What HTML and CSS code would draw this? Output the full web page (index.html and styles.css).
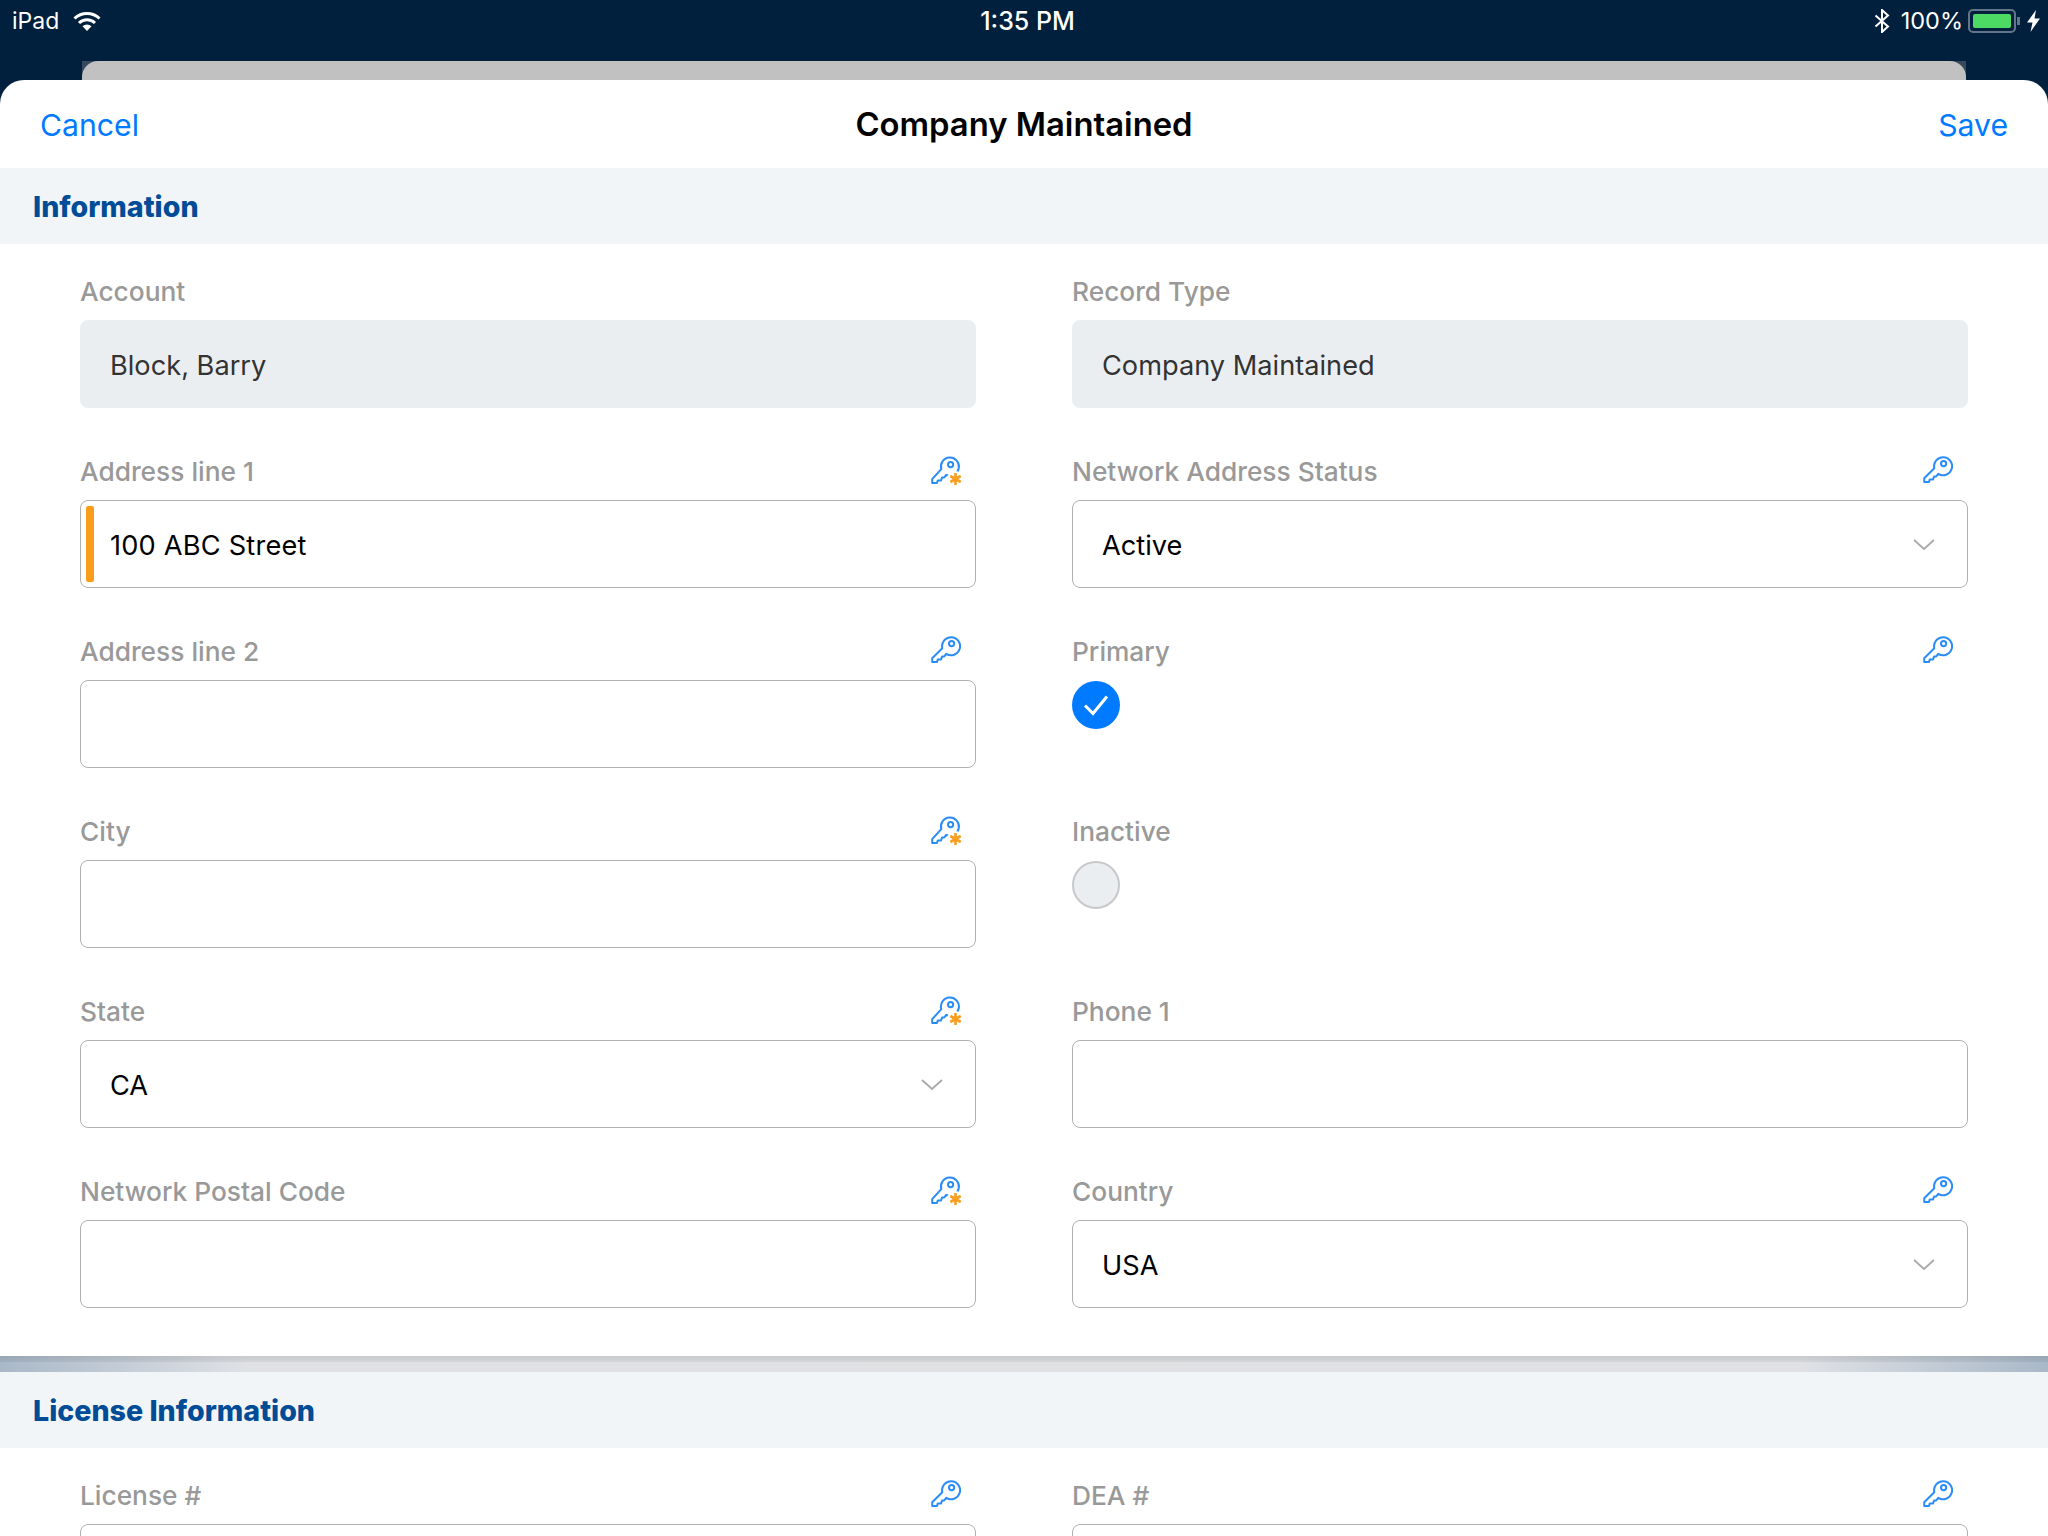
FILE: index.html
```html
<!DOCTYPE html>
<html lang="en">
<head>
  <meta charset="UTF-8">
  <title>Company Maintained</title>
  <link rel="stylesheet" href="styles.css">
</head>
<body>
  <svg class="defs" width="0" height="0">
    <symbol id="key" viewBox="0 0 30 28">
      <path d="M11.3 13.2 1.2 23.2V27H6l.8-2.600h3.300l.9-2.900h2.200l2-2.700A9 9 0 1 0 11.3 13.2Z" fill="none" stroke="#2a8cf7" stroke-width="2" stroke-linejoin="round"/>
      <circle cx="20.6" cy="8.6" r="2.6" fill="none" stroke="#2a8cf7" stroke-width="2"/>
    </symbol>
    <symbol id="key-star" viewBox="0 0 34 32">
      <path d="M10.3 13.2 1.2 23.2V27H6l.8-2.600h3.300l.9-2.900h2.200l2-2.700A9 9 0 1 0 10.3 13.2Z" fill="none" stroke="#2a8cf7" stroke-width="2" stroke-linejoin="round"/>
      <circle cx="19.6" cy="8.6" r="2.6" fill="none" stroke="#2a8cf7" stroke-width="2"/>
      <circle cx="24" cy="23" r="8" fill="#fff"/>
      <path d="M24.500 17v12M19.300 20l10.400 6M29.700 20l-10.400 6" stroke="#f99d1c" stroke-width="2.600" fill="none"/>
    </symbol>
    <symbol id="chevron" viewBox="0 0 22 11">
      <path d="M1 1l10 9 10-9" fill="none" stroke="#a9a9a9" stroke-width="1.800"/>
    </symbol>
  </svg>

  <div class="status-bar">
    <div class="status-left">
      <span>iPad</span>
      <svg class="wifi" width="28" height="20" viewBox="0 0 28 20">
        <path d="M1.500 7.500a18 18 0 0 1 25 0" fill="none" stroke="#fff" stroke-width="3"/>
        <path d="M6 12a11.500 11.500 0 0 1 16 0" fill="none" stroke="#fff" stroke-width="3"/>
        <path d="M9.500 15.200a6.500 6.500 0 0 1 9 0L14 20Z" fill="#fff"/>
      </svg>
    </div>
    <div class="status-time">1:35 PM</div>
    <div class="status-right">
      <svg width="16" height="24" viewBox="0 0 16 24">
        <path d="M1.500 6.500 14 17.500 8 23V1l6 5.500L1.500 17.500" fill="none" stroke="#fff" stroke-width="2"/>
      </svg>
      <span class="battery-pct">100%</span>
      <div class="battery"><div class="battery-fill"></div></div>
      <div class="battery-nub"></div>
      <svg class="bolt" width="13" height="22" viewBox="0 0 13 22">
        <path d="M9 0 0 12.500h5.500L3.500 22 13 8.500H7.500Z" fill="#fff"/>
      </svg>
    </div>
  </div>

  <div class="back-sheet"><div class="back-sheet-inner"></div></div>

  <div class="sheet">
    <header class="nav">
      <a class="nav-btn">Cancel</a>
      <h1 class="nav-title">Company Maintained</h1>
      <a class="nav-btn nav-btn-right">Save</a>
    </header>

    <h2 class="section-title">Information</h2>
    <div class="form-grid">
      <div class="field">
        <div class="field-label"><span>Account</span></div>
        <div class="box box-readonly">Block, Barry</div>
      </div>
      <div class="field">
        <div class="field-label"><span>Record Type</span></div>
        <div class="box box-readonly">Company Maintained</div>
      </div>

      <div class="field">
        <div class="field-label"><span>Address line 1</span><svg class="icon-star"><use href="#key-star"/></svg></div>
        <div class="box box-required">100 ABC Street</div>
      </div>
      <div class="field">
        <div class="field-label"><span>Network Address Status</span><svg class="icon-key"><use href="#key"/></svg></div>
        <div class="box">Active<svg class="chevron"><use href="#chevron"/></svg></div>
      </div>

      <div class="field">
        <div class="field-label"><span>Address line 2</span><svg class="icon-key"><use href="#key"/></svg></div>
        <div class="box"></div>
      </div>
      <div class="field">
        <div class="field-label"><span>Primary</span><svg class="icon-key"><use href="#key"/></svg></div>
        <div class="radio radio-on">
          <svg width="48" height="48" viewBox="0 0 48 48"><path d="M13 24.500l8 8 14-17" fill="none" stroke="#fff" stroke-width="3"/></svg>
        </div>
      </div>

      <div class="field">
        <div class="field-label"><span>City</span><svg class="icon-star"><use href="#key-star"/></svg></div>
        <div class="box"></div>
      </div>
      <div class="field">
        <div class="field-label"><span>Inactive</span></div>
        <div class="radio"></div>
      </div>

      <div class="field">
        <div class="field-label"><span>State</span><svg class="icon-star"><use href="#key-star"/></svg></div>
        <div class="box">CA<svg class="chevron"><use href="#chevron"/></svg></div>
      </div>
      <div class="field">
        <div class="field-label"><span>Phone 1</span></div>
        <div class="box"></div>
      </div>

      <div class="field">
        <div class="field-label"><span>Network Postal Code</span><svg class="icon-star"><use href="#key-star"/></svg></div>
        <div class="box"></div>
      </div>
      <div class="field">
        <div class="field-label"><span>Country</span><svg class="icon-key"><use href="#key"/></svg></div>
        <div class="box">USA<svg class="chevron"><use href="#chevron"/></svg></div>
      </div>
    </div>

    <div class="divider"></div>

    <h2 class="section-title">License Information</h2>
    <div class="form-grid">
      <div class="field">
        <div class="field-label"><span>License #</span><svg class="icon-key"><use href="#key"/></svg></div>
        <div class="box"></div>
      </div>
      <div class="field">
        <div class="field-label"><span>DEA #</span><svg class="icon-key"><use href="#key"/></svg></div>
        <div class="box"></div>
      </div>
    </div>
  </div>
</body>
</html>
```

FILE: styles.css
```css
* {
  box-sizing: border-box;
}
html, body {
  margin: 0;
  height: 1536px;
  overflow: hidden;
}
body {
  background: #01203d;
  font-family: Inter, "Liberation Sans", sans-serif;
}
.defs {
  position: absolute;
}
.status-bar {
  height: 41px;
  padding: 0 8px 0 12px;
  display: grid;
  grid-template-columns: 1fr auto 1fr;
  align-items: center;
  color: #fff;
  font-size: 23px;
}
.status-left {
  display: flex;
  align-items: center;
  gap: 14px;
}
.status-time {
  font-size: 25px;
  font-weight: 500;
  margin-left: 3px;
}
.status-right {
  display: flex;
  align-items: center;
  justify-content: flex-end;
}
.battery-pct {
  margin: 0 5px 0 11px;
  font-size: 23.5px;
}
.battery {
  width: 48px;
  height: 24px;
  padding: 3px;
  border: 2px solid #64758a;
  border-radius: 5px;
}
.battery-fill {
  height: 100%;
  background: #4cd964;
  border-radius: 2px;
}
.battery-nub {
  width: 3px;
  height: 8px;
  background: #64758a;
  margin-left: 1px;
}
.bolt {
  margin-left: 7px;
}
.back-sheet {
  height: 19px;
  margin: 20px 82px 0;
  background: #37495e;
}
.back-sheet-inner {
  height: 100%;
  background: #c1c1c1;
  border-radius: 16px 16px 0 0;
}
.sheet {
  background: #fff;
  border-radius: 24px 24px 0 0;
}
.nav {
  height: 88px;
  padding: 0 40px;
  display: grid;
  grid-template-columns: 1fr auto 1fr;
  align-items: center;
}
.nav-btn {
  color: #007aff;
  font-size: 30.2px;
  margin-top: 2px;
}
.nav-btn-right {
  justify-self: end;
}
.nav-title {
  margin: 0;
  font-size: 32.8px;
  font-weight: 600;
  color: #000;
}
.section-title {
  margin: 0;
  height: 76px;
  padding-left: 33px;
  display: flex;
  align-items: center;
  background: #f2f5f8;
  color: #004c97;
  font-size: 28.6px;
  font-weight: 800;
}
.form-grid {
  display: grid;
  grid-template-columns: 896px 896px;
  column-gap: 96px;
  row-gap: 36px;
  padding: 20px 80px 48px;
}
.field-label {
  height: 56px;
  padding: 0 12px 2px 0;
  display: flex;
  align-items: center;
  justify-content: space-between;
  color: #999;
  font-size: 26.3px;
  font-weight: 500;
}
.icon-key {
  width: 30px;
  height: 28px;
  margin-right: 3px;
  margin-top: -4px;
}
.icon-star {
  width: 34px;
  height: 32px;
  margin-right: -1px;
  margin-top: 2px;
}
.box {
  position: relative;
  height: 88px;
  padding: 2px 32px 0 29px;
  display: flex;
  align-items: center;
  justify-content: space-between;
  border: 1.5px solid #b0b0b0;
  border-radius: 8px;
  color: #000;
  font-size: 27.2px;
}
.box-readonly {
  background: #ebeef1;
  border-color: #ebeef1;
  color: #333;
}
.box-required {
  letter-spacing: 0.2px;
}
.box-required::before {
  content: "";
  position: absolute;
  left: 5px;
  top: 5px;
  bottom: 5px;
  width: 8px;
  background: #f99d1c;
  border-radius: 2px;
}
.chevron {
  width: 22px;
  height: 11px;
  margin-top: -2px;
}
.radio {
  width: 48px;
  height: 48px;
  margin-top: 1px;
  border: 2px solid #c8c8c8;
  border-radius: 50%;
  background: #ebeef1;
}
.radio-on {
  border: 0;
  background: #007aff;
}
.divider {
  height: 16px;
  background:
    linear-gradient(to bottom, rgba(0, 0, 0, 0.1), rgba(0, 0, 0, 0.06) 35%, transparent 40%),
    linear-gradient(to right, #a9b8c8, #dfe1e5 12%, #e0e1e3 50%, #dfe1e5 88%, #a9b8c8);
}
```
